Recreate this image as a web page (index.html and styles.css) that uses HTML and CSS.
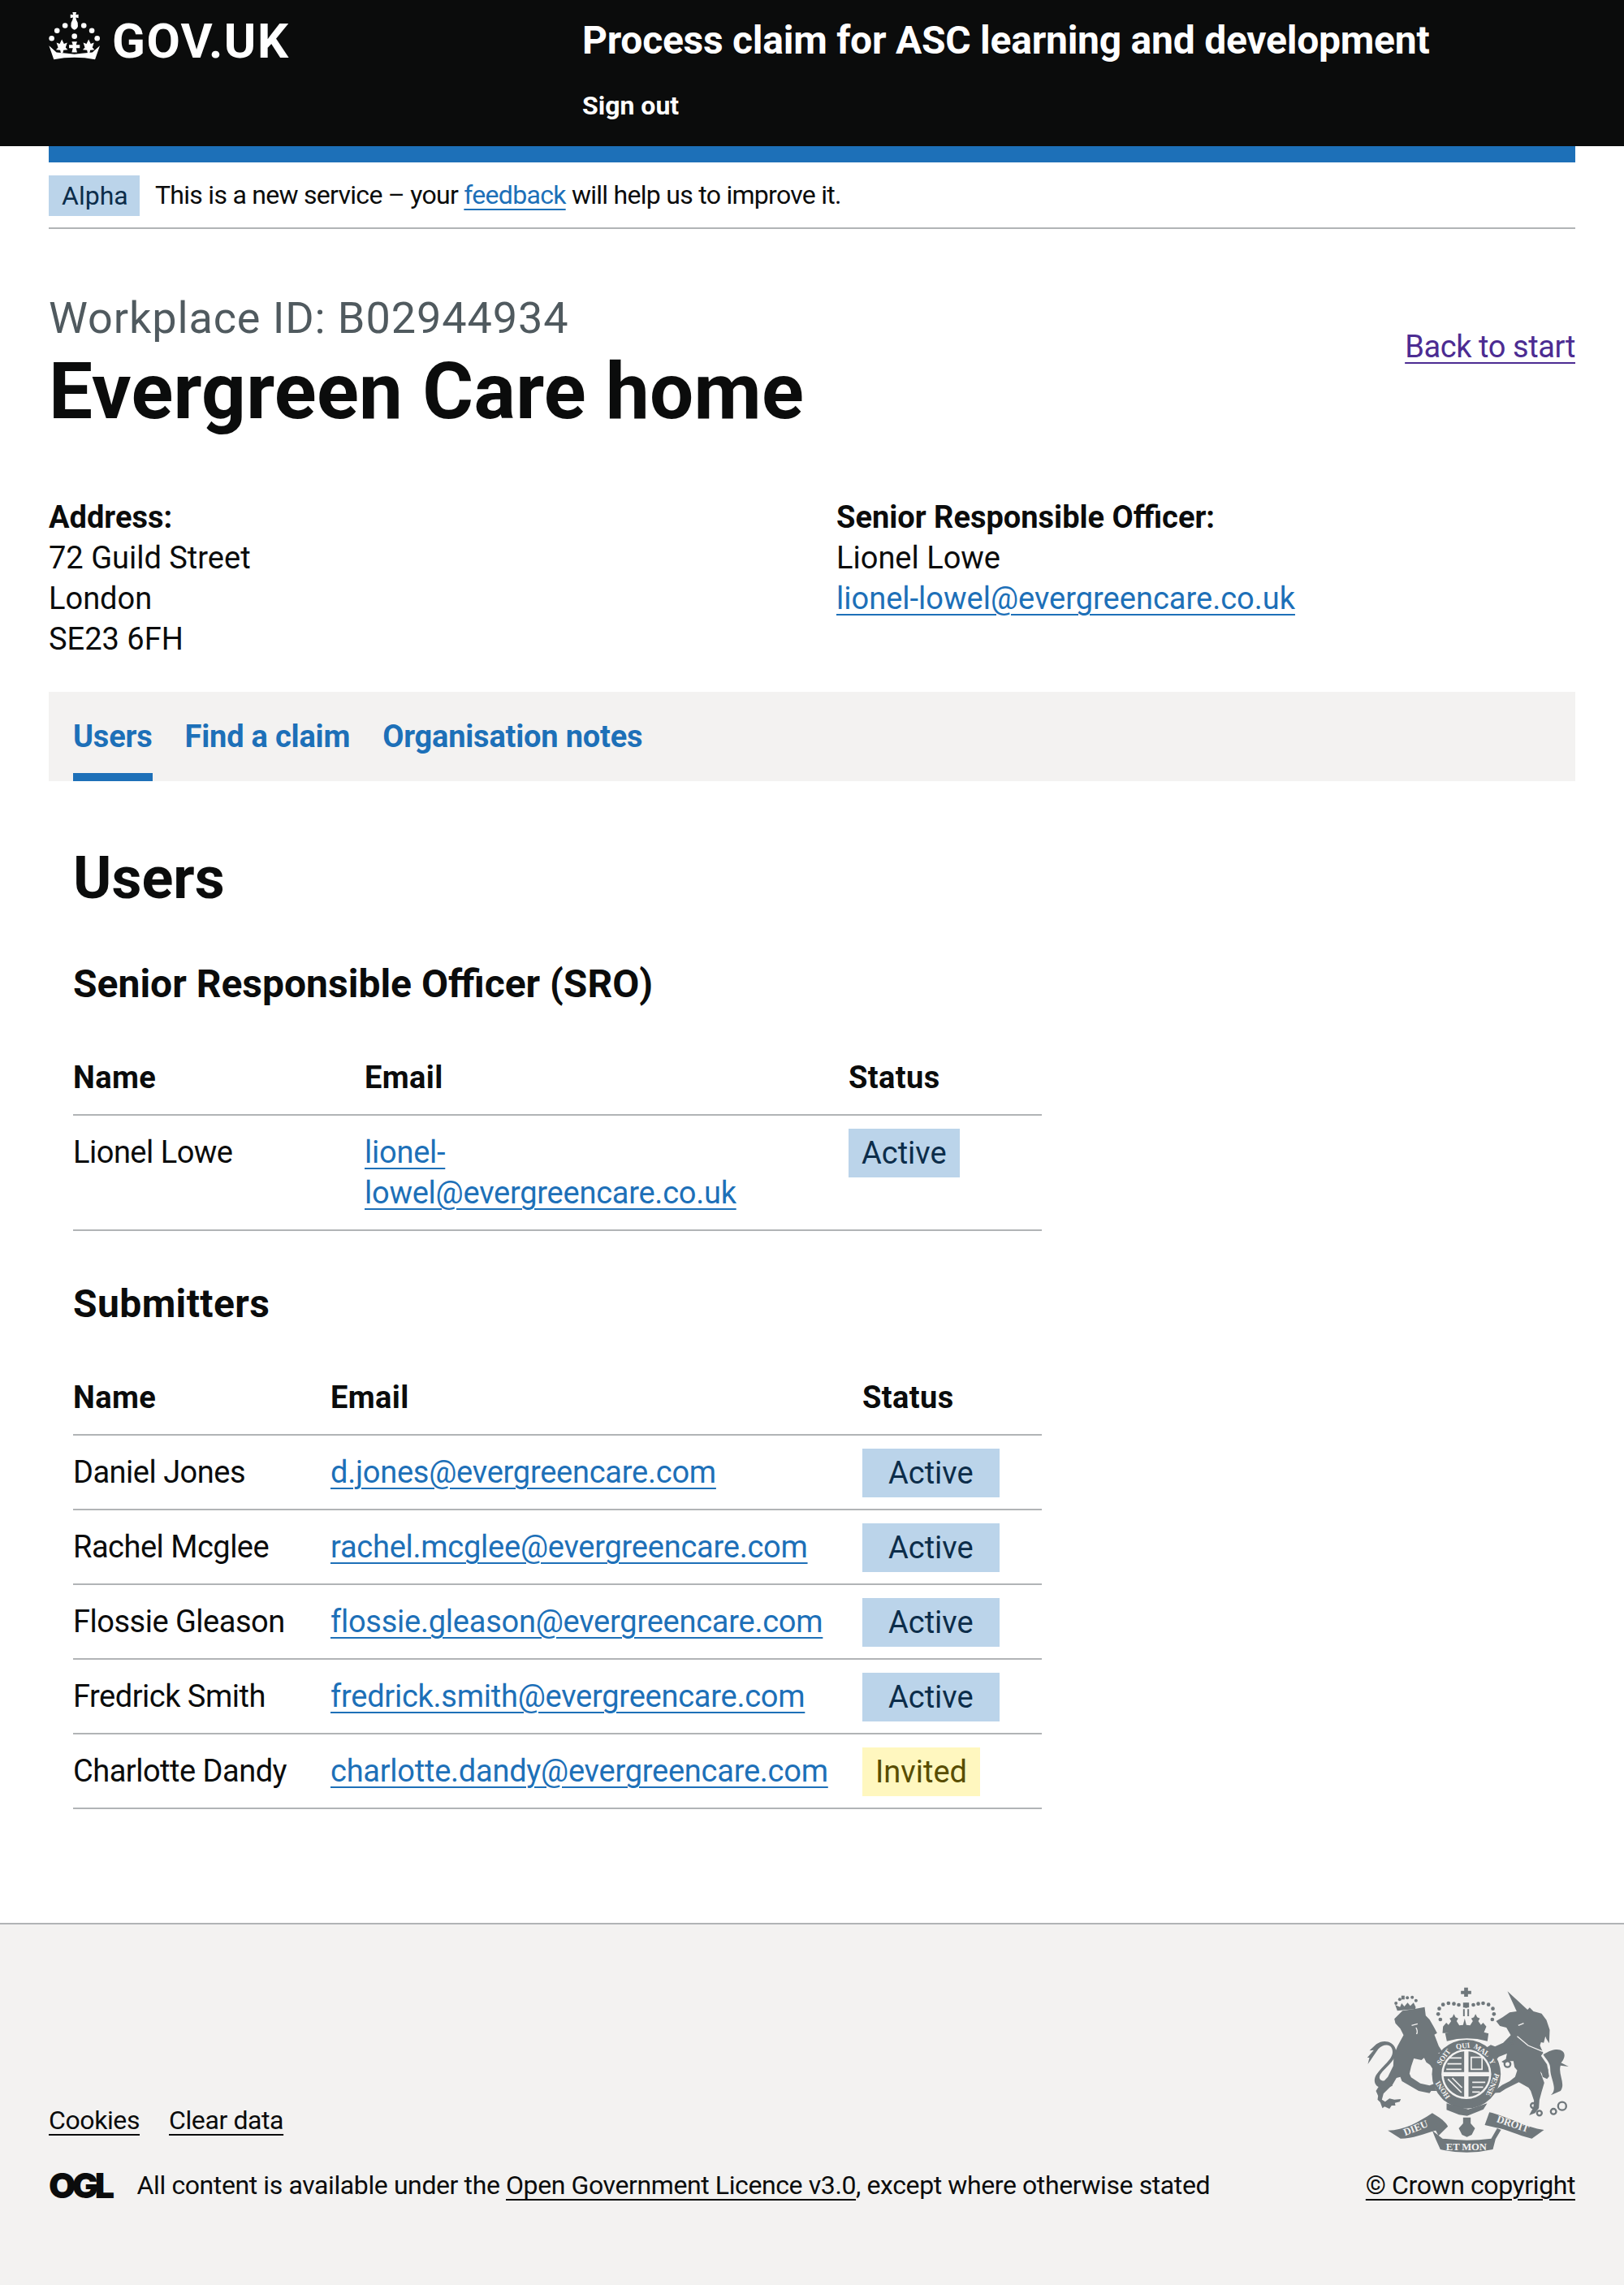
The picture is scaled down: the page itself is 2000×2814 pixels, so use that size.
FILE: index.html
```html
<!DOCTYPE html>
<html lang="en">
<head>
  <meta charset="UTF-8" />
  <title>Users - Process claim for ASC learning and development</title>
  <link rel="stylesheet" href="styles.css">
</head>
<body>
  <header class="site-header">
    <a class="logo" href="#">
      <svg class="crown" viewBox="30 15 192 182" aria-hidden="true">
        <g fill="#fff">
          <path d="M118 18h14l-2 10 10-2v14l-10-2 2 8q8 12 6 24-2 10-13 14-11-4-13-14-2-12 6-24l2-8-10 2V26l10 2z"/>
          <circle cx="90" cy="68" r="10"/><circle cx="160" cy="68" r="10"/>
          <circle cx="60" cy="87" r="10"/><circle cx="190" cy="87" r="10"/>
          <circle cx="40" cy="116" r="10"/><circle cx="210" cy="116" r="10"/>
          <circle cx="125" cy="108" r="10"/>
          <path d="M115 128h20l-4 12h14v12h-14l4 16h-20l4-16h-14v-12h14z"/>
          <path d="M78 120l8 16 12-4-6 18 8 8-16 2-2 10h-8l-2-10-16-2 8-8-6-18 12 4z"/>
          <path d="M178 120l8 16 12-4-6 18 8 8-16 2-2 10h-8l-2-10-16-2 8-8-6-18 12 4z"/>
          <path d="M30 143l28 25 40 4 27 3 27-3 40-4 28-25-18 52q-77-15-154 0z"/>
        </g>
      </svg>
      <span class="logo-text">GOV.UK</span>
    </a>
    <div class="service">
      <a class="service-name" href="#">Process claim for ASC learning and development</a>
      <a class="sign-out" href="#">Sign out</a>
    </div>
  </header>

  <div class="width-container">
    <div class="blue-bar"></div>
    <div class="phase-banner">
      <strong class="tag tag-alpha">Alpha</strong>
      <span class="phase-text">This is a new service – your <a class="link" href="#">feedback</a> will help us to improve it.</span>
    </div>

    <main>
      <div class="title-row">
        <div>
          <span class="caption">Workplace ID: B02944934</span>
          <h1>Evergreen Care home</h1>
        </div>
        <a class="back-link" href="#">Back to start</a>
      </div>

      <div class="details">
        <p><strong>Address:</strong><br>72 Guild Street<br>London<br>SE23 6FH</p>
        <p><strong>Senior Responsible Officer:</strong><br>Lionel Lowe<br><a class="link" href="#">lionel-lowel@evergreencare.co.uk</a></p>
      </div>

      <nav class="tabs">
        <a class="tab tab-current" href="#">Users</a>
        <a class="tab" href="#">Find a claim</a>
        <a class="tab" href="#">Organisation notes</a>
      </nav>

      <section class="panel">
        <h2>Users</h2>

        <h3>Senior Responsible Officer (SRO)</h3>
        <table class="table table-sro">
          <thead>
            <tr><th class="col-name">Name</th><th class="col-email">Email</th><th>Status</th></tr>
          </thead>
          <tbody>
            <tr>
              <td>Lionel Lowe</td>
              <td><a class="link" href="#">lionel-<br>lowel@evergreencare.co.uk</a></td>
              <td><strong class="tag">Active</strong></td>
            </tr>
          </tbody>
        </table>

        <h3 class="submitters">Submitters</h3>
        <table class="table table-submitters">
          <thead>
            <tr><th class="col-name">Name</th><th class="col-email">Email</th><th>Status</th></tr>
          </thead>
          <tbody>
            <tr><td>Daniel Jones</td><td><a class="link" href="#">d.jones@evergreencare.com</a></td><td><strong class="tag tag-wide">Active</strong></td></tr>
            <tr><td>Rachel Mcglee</td><td><a class="link" href="#">rachel.mcglee@evergreencare.com</a></td><td><strong class="tag tag-wide">Active</strong></td></tr>
            <tr><td>Flossie Gleason</td><td><a class="link" href="#">flossie.gleason@evergreencare.com</a></td><td><strong class="tag tag-wide">Active</strong></td></tr>
            <tr><td>Fredrick Smith</td><td><a class="link" href="#">fredrick.smith@evergreencare.com</a></td><td><strong class="tag tag-wide">Active</strong></td></tr>
            <tr><td>Charlotte Dandy</td><td><a class="link" href="#">charlotte.dandy@evergreencare.com</a></td><td><strong class="tag tag-yellow">Invited</strong></td></tr>
          </tbody>
        </table>
      </section>
    </main>
  </div>

  <footer class="site-footer">
    <div class="footer-left">
      <div class="footer-links">
        <a href="#">Cookies</a>
        <a href="#">Clear data</a>
      </div>
      <div class="licence">
        <span class="ogl">OGL</span>
        <span>All content is available under the <a href="#">Open Government Licence v3.0</a>, except where otherwise stated</span>
      </div>
    </div>
    <div class="footer-right">
      <svg class="arms" viewBox="130 90 755 612" aria-hidden="true">
        <g fill="#6f777b">
          <!-- lion -->
          <path d="M232 208l30-30 50-8 32-6 4 32 14 14 16 28 12 22-10 6 16 42 14 22-16 4 8 8-10 10 20 30 14 22-8 18-22 6-14-22-18-28-14-10-8-16-10 8-28-6-10 30-6 26 6 14 34 22 34 8 20-8 10 10-10 6 6 12-20 0-6 8-40-8-62-36-6-16-14 4-14 24-34 34-6 22 12 8 16-12 18 4 24-2-4 10-18 4 2 10-14 0-8 12-18-8-8 6-8-22-10-10 2-14-8-18 10-16 34-36 20-40 2-40 14-34 22-40-12-24-18-20z"/>
          <path d="M225 455c-55 22-78-8-60-40 24-38 72-62 58-98-8-18-34-16-50 2-12 16-24 36-39 56l6-24-8 0 24-28-16 2 26-24c24-18 60-12 70 16 14 38-36 66-56 96-10 20 6 30 40 20z"/>
          <!-- lion crown -->
          <path d="M243 178l-8-22 18 8 6-14 10 12 12-14 10 12 12-12 8 16-2 8-30 2z"/>
          <circle cx="238" cy="150" r="6"/><circle cx="252" cy="136" r="6"/><circle cx="280" cy="130" r="6"/><circle cx="298" cy="128" r="6"/><circle cx="312" cy="140" r="6"/>
          <path d="M258 122h12v14h-12z"/>
          <!-- big crown -->
          <path d="M490 92h14v12h12v12h-12v10h-14v-10h-12v-12h12z"/>
          <path d="M486 148h22v18h-22zM486 172h6v26h-6zM502 172h6v26h-6z"/>
          <path d="M412 236l12-14 8 8 10-14-6-10 10-4 6-12 6 12 10 4-6 10 10 16 14-2 6-24 6 24 14 2 10-16-6-10 10-4 6-12 6 12 10 4-6 10 10 14 8-8 12 14-10 24-152 0z"/>
          <path d="M420 262q78-24 160 0l-4 28q-76-20-150 0z"/>
          <!-- garter and shield -->
          <circle cx="498" cy="412" r="127"/>
          <circle cx="498" cy="412" r="92" fill="#f3f2f1"/>
          <path d="M490 404V328A84 84 0 0 0 414 404zM506 404V328A84 84 0 0 1 582 404zM490 420H414A84 84 0 0 0 490 496zM506 420H582A84 84 0 0 1 506 496z"/>
          <path d="M436 352h44M428 374h52M424 394h56M520 442h48M520 460h40M520 478h28M430 430l50 50M446 426l36 36M516 350h40v44h-40z" fill="none" stroke="#f3f2f1" stroke-width="5"/>
          <!-- buckle -->
          <path d="M425 520l20 6 60 16 70-22-14 22-60 24-30-4-46-18z"/>
          <!-- unicorn -->
          <path d="M650 106l74 68 8-8 14 14 30 8 18 24 12 36-2 50-10-16-4-10-6 24-10-2-4 12 12 28-8 10 22 32 8 44-8 10-16-8-6-26-2 10 14 38-10 34-8 30-2 30-14 18-22 8 16-30 2-24-12-36-8-12-36-20-48 24-22 14-28 2 12-12 24-18 28-14 20-16 8-24-10-12-4-22-20 0-14 8-10-6 16-10 4-20-30 12-14 16-6-6-14-18-30-22 4-8 14 4 16-10 16 6 30-14 28-28-16-28-24-6-14-18 24-14 26-18 26-4z"/>
          <path d="M782 340c60-40 100-10 66 30l28 14-30-4c-10 32 20 68 0 94l-36 16c28-24-2-60-2-98 0-22-12-30-26-52z"/>
          <!-- scroll -->
          <path d="M208 620C270 620 320 590 372 556 395 570 420 585 430 605L395 640 385 620C340 632 300 650 255 650z"/>
          <path d="M372 620L410 650Q500 662 590 650L612 612 626 618 606 652 596 690Q500 712 402 690L386 655z"/>
          <path d="M583 553C640 565 720 610 785 618L740 650C690 640 640 612 608 610L566 600z"/>
          <path d="M486 572h28v22l16 18-12 24-18 8-18-8-12-24 16-18z"/>
        </g>
        <g fill="none" stroke="#f3f2f1" stroke-width="4">
          <path d="M296 232l22-6M312 240q8 14 2 24"/>
          <path d="M686 272l40 34 54 22"/>
          <path d="M690 232l20-8"/>
        </g>
        <g fill="none" stroke="#6f777b" stroke-width="7">
          <circle cx="745" cy="528" r="9"/><circle cx="768" cy="556" r="9"/><circle cx="820" cy="550" r="10"/><circle cx="852" cy="530" r="15"/>
          <circle cx="663" cy="290" r="10"/><circle cx="650" cy="375" r="11"/><circle cx="786" cy="398" r="11"/>
        </g>
        <g fill="#6f777b">
          <circle cx="398" cy="170" r="7"/><circle cx="394" cy="190" r="7"/><circle cx="412" cy="155" r="7"/><circle cx="432" cy="150" r="7"/><circle cx="452" cy="152" r="7"/><circle cx="470" cy="156" r="7"/>
          <circle cx="596" cy="170" r="7"/><circle cx="600" cy="190" r="7"/><circle cx="580" cy="155" r="7"/><circle cx="560" cy="150" r="7"/><circle cx="542" cy="152" r="7"/><circle cx="524" cy="156" r="7"/>
          <circle cx="402" cy="210" r="7"/><circle cx="594" cy="210" r="7"/><circle cx="497" cy="158" r="9"/>
        </g>
        <g class="garter-text">
          <text x="498" y="316" transform="rotate(-53 498 412)">SOIT</text>
          <text x="498" y="316" transform="rotate(-7 498 412)">QUI</text>
          <text x="498" y="316" transform="rotate(33 498 412)">MAL</text>
          <text x="498" y="316" transform="rotate(64 498 412)">Y</text>
          <text x="498" y="316" transform="rotate(112 498 412)">PENSE</text>
          <text x="498" y="316" transform="rotate(-124 498 412)">HONI</text>
        </g>
        <g class="scroll-text">
          <text transform="translate(272 640) rotate(-22)">DIEU</text>
          <text class="scroll-middle" x="498" y="692">ET MON</text>
          <text transform="translate(608 588) rotate(19)">DROIT</text>
        </g>
      </svg>
      <a class="copyright" href="#">© Crown copyright</a>
    </div>
  </footer>
</body>
</html>
```

FILE: styles.css
```css
* {
  box-sizing: border-box;
}
body {
  margin: 0;
  font-family: Roboto, Arial, sans-serif;
  font-size: 38px;
  line-height: 50px;
  color: #0b0c0c;
  background: #fff;
}
a {
  color: inherit;
}
.link {
  color: #1d70b8;
  text-decoration-thickness: 2px;
  text-underline-offset: 6px;
}

/* Header */
.site-header {
  display: flex;
  height: 180px;
  padding: 0 60px;
  background: #0b0c0c;
  color: #fff;
}
.logo {
  display: flex;
  align-items: flex-start;
  width: 657px;
  padding-top: 14px;
  text-decoration: none;
  flex: none;
}
.crown {
  width: 64px;
  height: 60px;
  flex: none;
}
.logo-text {
  margin-left: 14px;
  padding-top: 12px;
  font-size: 60px;
  line-height: 50px;
  font-weight: 700;
  letter-spacing: 1.5px;
}
.service {
  display: flex;
  flex-direction: column;
  padding-top: 20px;
}
.service-name {
  font-size: 48px;
  line-height: 60px;
  font-weight: 700;
  letter-spacing: -0.25px;
  text-decoration: none;
}
.sign-out {
  margin-top: 30px;
  font-size: 32px;
  line-height: 40px;
  font-weight: 700;
  text-decoration: none;
}

.width-container {
  padding: 0 60px;
}
.blue-bar {
  height: 20px;
  background: #1d70b8;
}

/* Phase banner */
.phase-banner {
  display: flex;
  align-items: center;
  gap: 19px;
  height: 82px;
  padding: 16px 0 14px;
  font-size: 32px;
  line-height: 50px;
  border-bottom: 2px solid #b1b4b6;
}
.phase-text {
  margin-top: -2px;
  letter-spacing: -0.72px;
}
.tag {
  display: inline-block;
  padding: 5px 16px;
  background: #bbd4ea;
  color: #0c2d4a;
  font-weight: 400;
  line-height: 50px;
}
.tag-alpha {
  padding: 0 16px;
  width: 112px;
}
.tag-wide {
  padding-left: 32px;
  padding-right: 32px;
}
.tag-yellow {
  background: #fff7bf;
  color: #594d00;
}

/* Title */
.title-row {
  display: flex;
  justify-content: space-between;
  align-items: flex-start;
  padding-top: 80px;
}
.caption {
  display: block;
  font-size: 54px;
  line-height: 60px;
  letter-spacing: 0.9px;
  color: #505a5f;
}
h1 {
  margin: 10px 0 0;
  font-size: 96px;
  line-height: 100px;
  font-weight: 700;
  letter-spacing: 0.3px;
}
.back-link {
  color: #4c2c92;
  margin-top: 40px;
  letter-spacing: -0.4px;
  text-decoration-thickness: 2px;
  text-underline-offset: 6px;
}

/* Address and SRO */
.details {
  display: grid;
  grid-template-columns: 970px 1fr;
  margin-top: 80px;
}
.details p {
  margin: 0;
}

/* Tabs */
.tabs {
  display: flex;
  gap: 40px;
  height: 110px;
  margin-top: 40px;
  padding: 0 30px;
  background: #f3f2f1;
  letter-spacing: -0.2px;
}
.tab {
  padding-top: 30px;
  color: #1d70b8;
  font-weight: 700;
  text-decoration: none;
}
.tab-current {
  border-bottom: 10px solid #1d70b8;
}

/* Panel */
.panel {
  width: 1253px;
  padding: 0 30px;
}
h2 {
  margin: 0;
  padding-top: 80px;
  font-size: 72px;
  line-height: 80px;
  font-weight: 700;
}
h3 {
  margin: 0;
  padding-top: 60px;
  font-size: 48px;
  line-height: 60px;
  font-weight: 700;
}
.submitters {
  padding-top: 60px;
  letter-spacing: 0.4px;
}
.table {
  width: 1193px;
  margin-top: 40px;
  border-collapse: collapse;
  table-layout: fixed;
}
.table th,
.table td {
  padding: 20px 0 16px;
  text-align: left;
  vertical-align: top;
  border-bottom: 2px solid #b1b4b6;
}
.table th {
  padding-top: 20px;
  padding-bottom: 20px;
  font-weight: 700;
  letter-spacing: 0.4px;
}
.table td:first-child {
  letter-spacing: -0.5px;
}
.table td:last-child {
  padding-top: 16px;
}
.table .link {
  letter-spacing: -0.25px;
}
.table td .tag {
  display: block;
  width: fit-content;
}
.table-sro .col-name {
  width: 359px;
}
.table-sro .col-email {
  width: 596px;
}
.table-sro td {
  padding-bottom: 20px;
}
.table-submitters .col-name {
  width: 317px;
}
.table-submitters .col-email {
  width: 655px;
}
.table-submitters td {
  height: 92px;
  padding-bottom: 14px;
}

/* Footer */
.site-footer {
  display: flex;
  justify-content: space-between;
  align-items: flex-end;
  height: 447px;
  margin-top: 140px;
  padding: 0 60px 104px;
  background: #f3f2f1;
  border-top: 2px solid #b1b4b6;
  font-size: 32px;
  line-height: 40px;
  letter-spacing: -0.4px;
}
.site-footer a {
  text-decoration-thickness: 2px;
  text-underline-offset: 6px;
}
.footer-links {
  display: flex;
  gap: 36px;
  margin-bottom: 40px;
}
.licence {
  display: flex;
  align-items: center;
  gap: 32px;
}
.ogl {
  font-family: Inter, sans-serif;
  font-weight: 900;
  font-size: 43px;
  letter-spacing: -4.5px;
}
.footer-right {
  display: flex;
  flex-direction: column;
  align-items: flex-end;
}
.arms {
  width: 252px;
  height: 204px;
  margin-right: 5px;
  margin-bottom: 20px;
}
.garter-text text,
.scroll-text text {
  fill: #f3f2f1;
  font-family: "Liberation Serif", serif;
  font-weight: 700;
  text-anchor: middle;
}
.garter-text text {
  font-size: 28px;
}
.scroll-text text {
  font-size: 38px;
  text-anchor: start;
}
.scroll-text .scroll-middle {
  text-anchor: middle;
}
```
